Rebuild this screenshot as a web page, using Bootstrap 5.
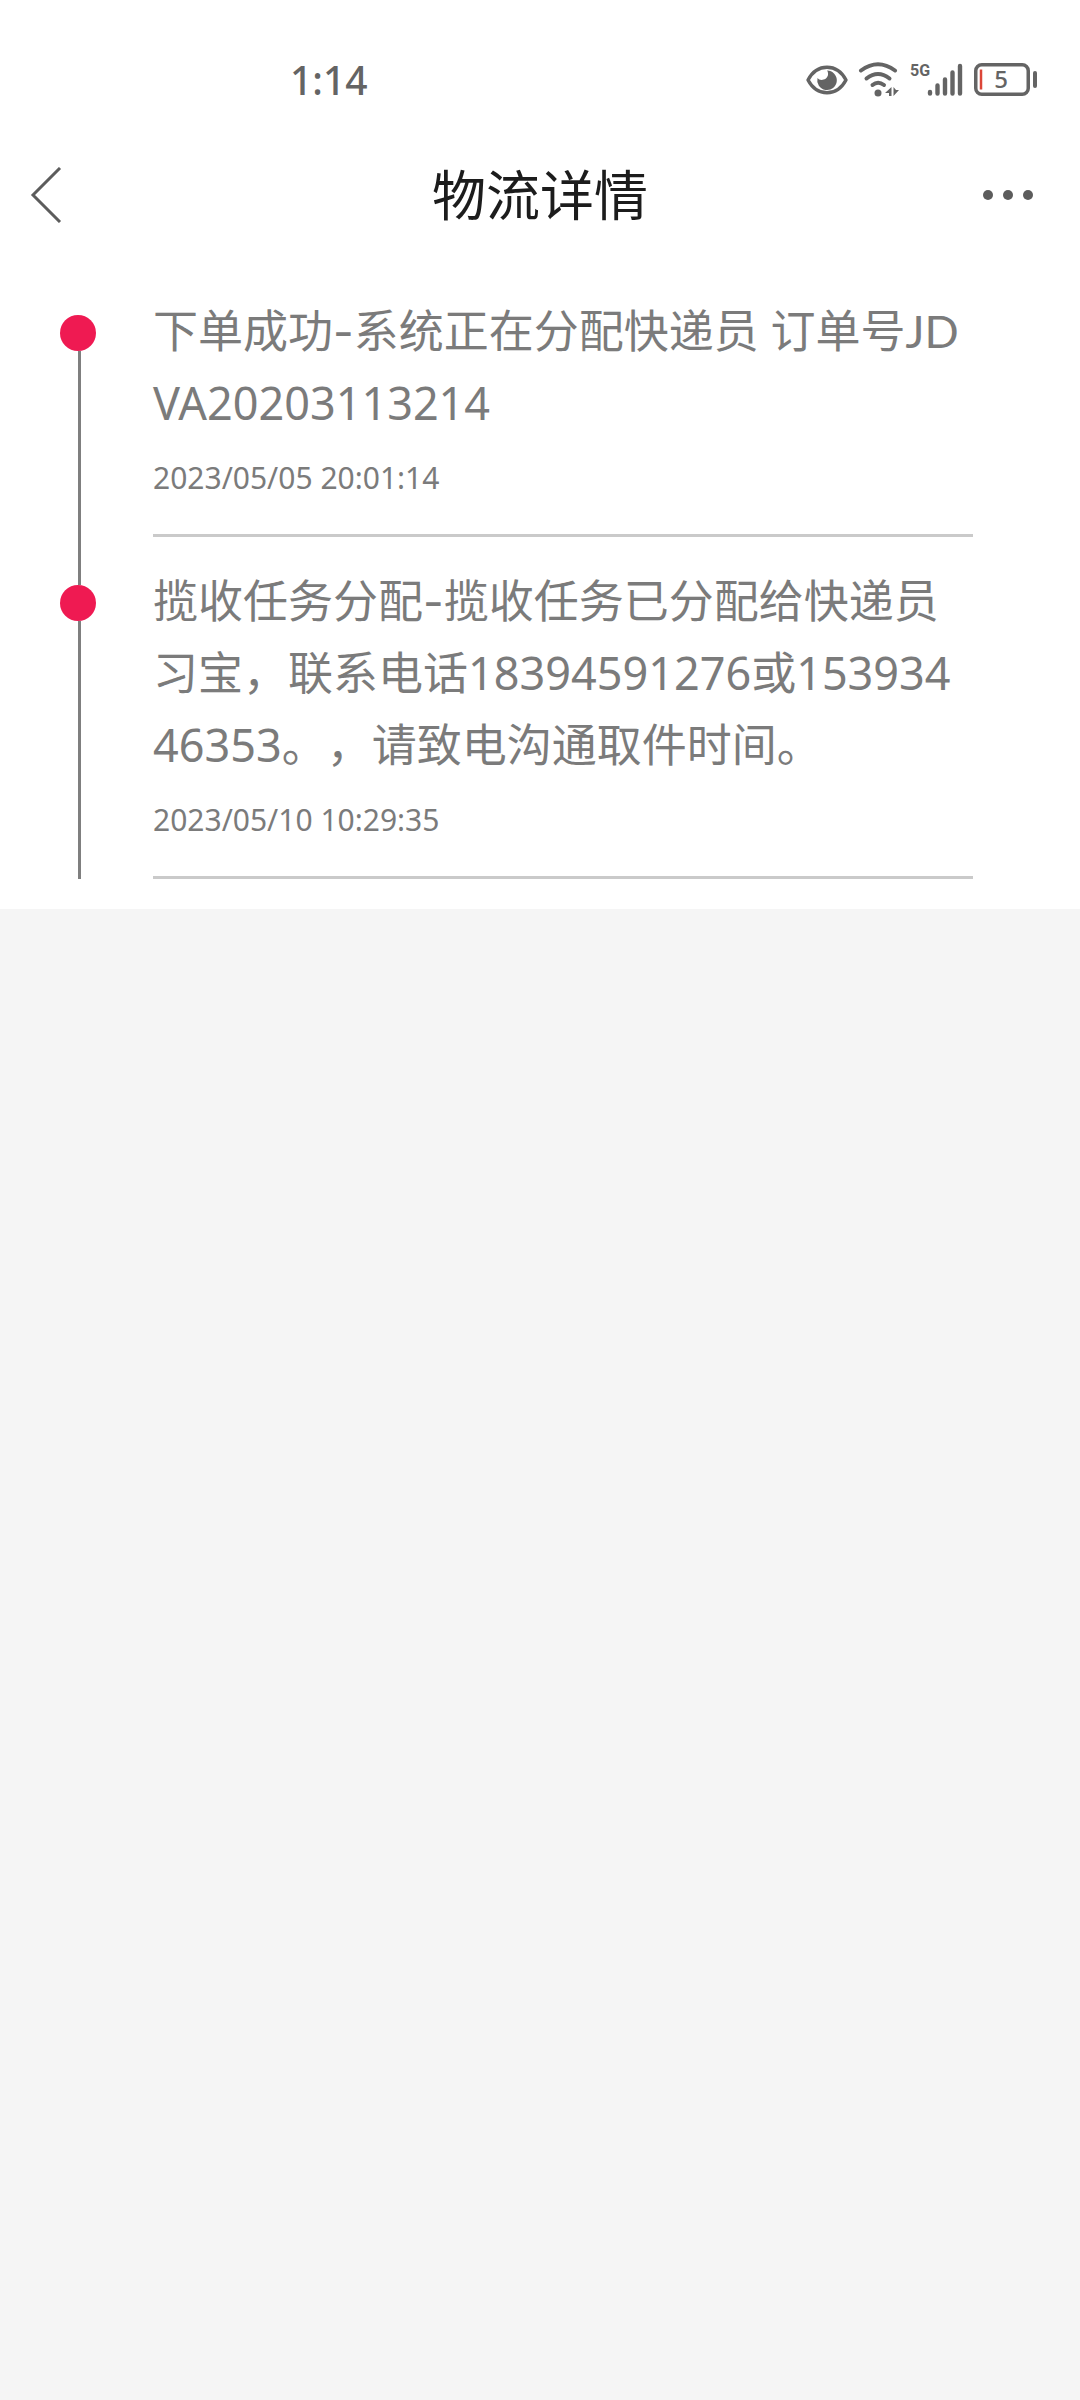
<!DOCTYPE html>
<html lang="zh-CN">
<head>
<meta charset="utf-8">
<meta name="viewport" content="width=device-width, initial-scale=1">
<title>物流详情</title>
<link rel="stylesheet" href="https://cdn.jsdelivr.net/npm/bootstrap@5.3.0/dist/css/bootstrap.min.css">
<style>
  body { background: #f5f5f5; color: #7b7b7b; font-family: "Noto Sans", "Noto Sans CJK SC", sans-serif; text-spacing-trim: space-all; }
  .status-bar { height: 160px; padding: 0 42px 0 290px; color: #646464; }
  .clock { font-size: 39px; line-height: 48px; font-weight: 500; }
  .status-icons { gap: 10px; }
  .status-icons svg { display: block; }
  .title-bar { height: 70px; padding: 0 42px 0 30px; }
  .title-bar h1 { font-size: 54px; line-height: 70px; font-weight: 400; color: #1c1c1c; }
  .bar-side { width: 60px; color: #5c5c5c; }
  .bar-back { width: 72px; }
  .timeline { padding: 65px 107px 30px 60px; }
  .rail { width: 93px; }
  .rail-line { width: 3px; margin-left: 18px; background: #7f7f7f; }
  .rail-top { height: 20px; }
  .step:first-child .rail-top { background: transparent; }
  .rail-dot { width: 36px; height: 36px; background: #ef1a52; }
  .step:not(:last-child) .step-body { margin-bottom: 28px; }
  .step-body { border-bottom: 3px solid #cacaca; padding-bottom: 32px; }
  .step-text { font-size: 45px; line-height: 72px; margin-bottom: 15px; word-break: break-all; }
  .dash { font-family: Inter, sans-serif; line-height: 1; }
  .order-prefix { font-family: Lato, sans-serif; line-height: 1; }
  .step-time { font-size: 30px; line-height: 48px; }
</style>
<script defer src="https://cdn.jsdelivr.net/npm/bootstrap@5.3.0/dist/js/bootstrap.bundle.min.js"></script>
</head>
<body>
<div class="bg-white">
  <div class="status-bar d-flex align-items-center justify-content-between">
    <span class="clock">1:14</span>
    <div class="status-icons d-flex align-items-center">
      <svg width="42" height="36" viewBox="0 0 42 36" aria-hidden="true">
        <path d="M2 18C11 1 31 1 40 18C31 35 11 35 2 18Z" fill="none" stroke="currentColor" stroke-width="3.4" stroke-linejoin="round"/>
        <path d="M21 8.500a9.800 9.800 0 1 1-9.500 7.500c2.500 3.500 9.500 2 10.500-3 .3-2-.2-3.500-1-4.500z" fill="currentColor"/>
      </svg>
      <svg width="42" height="36" viewBox="0 0 42 36" aria-hidden="true">
        <g fill="none" stroke="currentColor" stroke-width="4" stroke-linecap="round">
          <path d="M3 8.500Q20-4 37 8.500"/><path d="M8.500 16.500Q20 7.500 31.500 16.500"/><path d="M14.500 23Q20 18.500 26 23"/>
        </g>
        <circle cx="20" cy="31" r="3.500" fill="currentColor"/>
        <path d="M33.500 25v9h-2.500v-3h-4zM35.500 25v9l5.500-6h-3z" fill="currentColor"/>
      </svg>
      <svg width="54" height="36" viewBox="0 0 54 36" role="img" aria-label="5G">
        <text x="0" y="14" font-family="Roboto, sans-serif" font-size="16" font-weight="700" fill="currentColor">5G</text>
        <g stroke="currentColor" stroke-width="4.400" stroke-linecap="round">
          <path d="M20 30v1.500M27.500 23.500v8M35 17.500v14M42.500 10.500v21M50 4v27.500"/>
        </g>
      </svg>
      <svg width="64" height="36" viewBox="0 0 64 36" role="img" aria-label="5%">
        <rect x="1.750" y="2.750" width="52.500" height="29.500" rx="6" fill="none" stroke="currentColor" stroke-width="3.500"/>
        <path d="M7 7.500v20" stroke="#dc4638" stroke-width="2.500"/>
        <path d="M61 11v13" stroke="currentColor" stroke-width="4" stroke-linecap="round"/>
        <text x="27" y="26" text-anchor="middle" font-family="Noto Sans, sans-serif" font-size="24" font-weight="500" fill="currentColor">5</text>
      </svg>
    </div>
  </div>

  <header class="title-bar d-flex align-items-center justify-content-between">
    <button type="button" class="btn p-0 border-0 bar-side bar-back text-start" aria-label="返回">
      <svg class="d-block" width="32" height="56" viewBox="0 0 32 56"><path d="M30 1L3 28L30 55" fill="none" stroke="currentColor" stroke-width="3"/></svg>
    </button>
    <h1 class="m-0">物流详情</h1>
    <button type="button" class="btn p-0 border-0 bar-side" aria-label="更多">
      <svg class="d-block" width="60" height="20" viewBox="0 0 60 20" fill="currentColor"><circle cx="10" cy="10" r="5"/><circle cx="30" cy="10" r="5"/><circle cx="50" cy="10" r="5"/></svg>
    </button>
  </header>

  <main>
    <ol class="timeline list-unstyled m-0">
      <li class="step d-flex">
        <div class="rail d-flex flex-column flex-shrink-0">
          <span class="rail-line rail-top"></span><span class="rail-dot rounded-circle"></span><span class="rail-line flex-grow-1"></span>
        </div>
        <div class="step-body flex-grow-1">
          <p class="step-text">下单成功<span class="dash">-</span>系统正在分配快递员 订单号<span class="order-prefix">JD</span>VA20203113214</p>
          <time class="step-time d-block" datetime="2023-05-05T20:01:14">2023/05/05 20:01:14</time>
        </div>
      </li>
      <li class="step d-flex">
        <div class="rail d-flex flex-column flex-shrink-0">
          <span class="rail-line rail-top"></span><span class="rail-dot rounded-circle"></span><span class="rail-line flex-grow-1"></span>
        </div>
        <div class="step-body flex-grow-1">
          <p class="step-text">揽收任务分配<span class="dash">-</span>揽收任务已分配给快递员习宝，联系电话18394591276或15393446353。，请致电沟通取件时间。</p>
          <time class="step-time d-block" datetime="2023-05-10T10:29:35">2023/05/10 10:29:35</time>
        </div>
      </li>
    </ol>
  </main>
</div>
</body>
</html>
